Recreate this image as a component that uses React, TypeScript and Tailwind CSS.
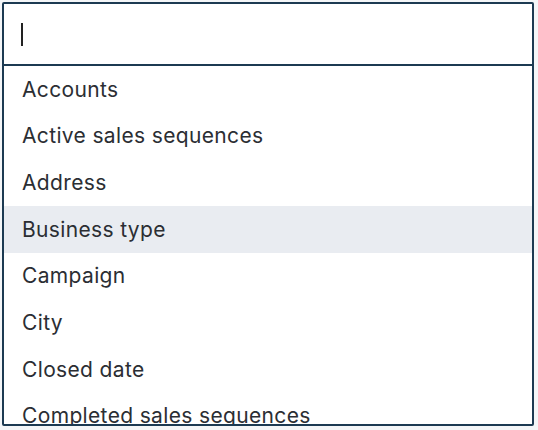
const fields = [
  "Accounts",
  "Active sales sequences",
  "Address",
  "Business type",
  "Campaign",
  "City",
  "Closed date",
  "Completed sales sequences",
];

export default function App() {
  return (
    <div className="h-[430px] w-[538px] overflow-hidden bg-[#f4f6f8] pl-[2px] pt-[2px] font-['Inter',sans-serif]">
      <div className="flex h-[424px] w-[532px] flex-col overflow-hidden rounded-[2px] border-2 border-[#1c3a52] bg-white">
        <div className="flex h-[62px] shrink-0 items-center border-b-2 border-[#1c3a52] pl-[17px]">
          <span className="h-[23px] w-[2px] bg-[#222]" />
        </div>
        <ul className="flex flex-col">
          {fields.map((f) => (
            <li
              key={f}
              className={`flex h-[46.67px] shrink-0 items-center pl-[18px] text-[21px] tracking-[0.35px] text-[#2b2e33] ${
                f === "Business type" ? "bg-[#e9ecf1]" : ""
              }`}
            >
              {f}
            </li>
          ))}
        </ul>
      </div>
    </div>
  );
}
